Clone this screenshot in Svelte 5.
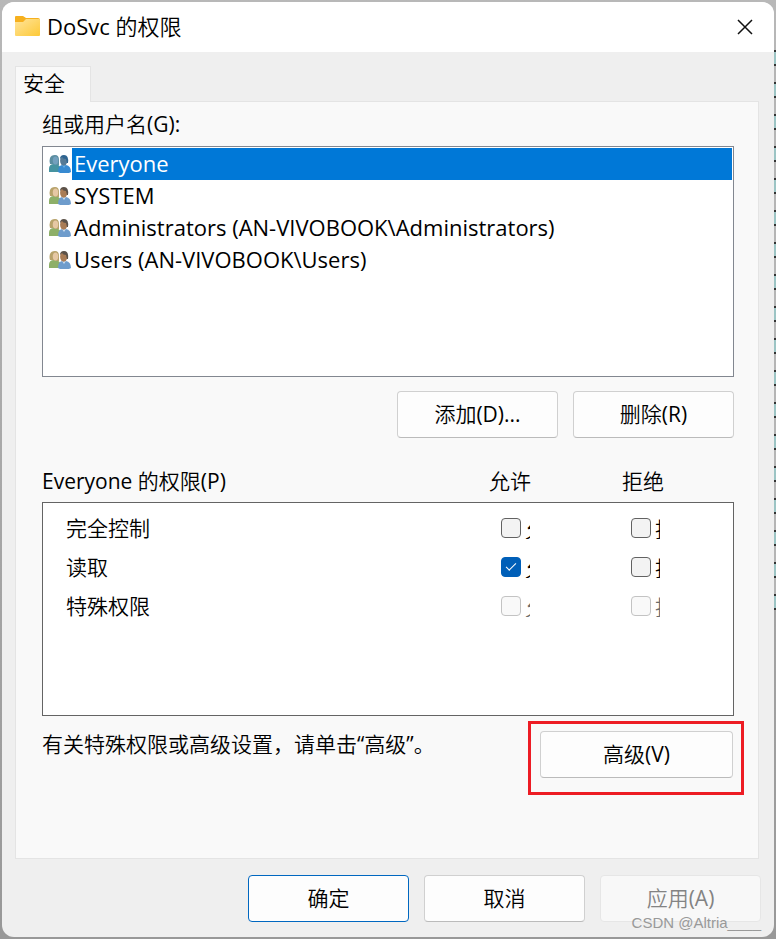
<script>
    const groups = [
        'Everyone',
        'SYSTEM',
        'Administrators (AN-VIVOBOOK\\Administrators)',
        'Users (AN-VIVOBOOK\\Users)'
    ];

    let selected = $state(groups[0]);
    let permissions = $state([
        {name: '完全控制', allow: false, deny: false},
        {name: '读取', allow: true, deny: false},
        {name: '特殊权限', allow: false, deny: false, disabled: true}
    ]);

    function shortName(name) {
        return name.split(' (')[0];
    }

    function onKey(event, name) {
        if (event.key === 'Enter' || event.key === ' ') {
            event.preventDefault();
            selected = name;
        }
    }
</script>

<main class="desktop">
    <div class="dialog" role="dialog" aria-labelledby="title">
        <header>
            <svg class="folder" viewBox="0 0 25 20" aria-hidden="true">
                <defs>
                    <linearGradient id="front" x1="0" y1="0" x2="1" y2="1">
                        <stop offset="0" stop-color="#ffe49b"/>
                        <stop offset="1" stop-color="#fdc937"/>
                    </linearGradient>
                </defs>
                <path d="M0 1Q0 0 1 0H8L11 2H23Q25 2 25 4V9H0Z" fill="#f6b01e"/>
                <path d="M0 6H8L11 3H24Q25 3 25 4V19Q25 20 24 20H1Q0 20 0 19Z" fill="url(#front)"/>
            </svg>
            <h1 id="title">DoSvc 的权限</h1>
            <button class="close" aria-label="关闭">
                <svg viewBox="0 0 16 16" aria-hidden="true">
                    <path d="M1 1L15 15M15 1L1 15" stroke="#111" stroke-width="1.5" fill="none"/>
                </svg>
            </button>
        </header>

        <div class="content">
            <div class="tabs" role="tablist">
                <button class="tab" role="tab" aria-selected="true">安全</button>
            </div>
            <section class="panel">
                <div class="label" id="groups-label">组或用户名(G):</div>
                <ul class="groups" role="listbox" aria-labelledby="groups-label">
                    {#each groups as name}
                        <li role="option"
                            tabindex="0"
                            class:active={selected === name}
                            aria-selected={selected === name}
                            onclick={() => selected = name}
                            onkeydown={(e) => onKey(e, name)}>
                            <svg class="people" viewBox="0 0 22 20" aria-hidden="true">
                                <path class="body-a" d="M0 18V15Q0 10 5 10Q11 10 12 15V18Z"/>
                                <path class="hair-a" d="M1 10Q0 7 1 4Q2 1 6 1Q10 1 10 6V11H7L4 10Z"/>
                                <ellipse class="face-a" cx="6.500" cy="6.500" rx="2.700" ry="4"/>
                                <path class="body-b" d="M9 18Q9 12 13 11H17Q22 12 22 18L20 19H11Z"/>
                                <path class="collar" d="M13 11L15 14L17 11Z"/>
                                <ellipse class="face-b" cx="14.700" cy="6.700" rx="3.600" ry="5"/>
                                <path class="hair-b" d="M11 5Q11 1 15 1Q20 1 19 9L18 9L17 5Q14 5 13 3Z"/>
                            </svg>
                            <span>{name}</span>
                        </li>
                    {/each}
                </ul>
                <div class="actions">
                    <button class="btn">添加(D)...</button>
                    <button class="btn">删除(R)</button>
                </div>

                <div class="heads">
                    <div class="head-name">{shortName(selected)} 的权限(P)</div>
                    <div class="head-allow" id="allow">允许</div>
                    <div class="head-deny" id="deny">拒绝</div>
                </div>
                <div class="permissions">
                    <table aria-describedby="allow deny">
                        <tbody>
                            {#each permissions as item}
                                <tr>
                                    <th scope="row">{item.name}</th>
                                    <td class="allow">
                                        <label class:disabled={item.disabled}>
                                            <input type="checkbox" bind:checked={item.allow} disabled={item.disabled}>
                                            <span>允许</span>
                                        </label>
                                    </td>
                                    <td class="deny">
                                        <label class:disabled={item.disabled}>
                                            <input type="checkbox" bind:checked={item.deny} disabled={item.disabled}>
                                            <span>拒绝</span>
                                        </label>
                                    </td>
                                </tr>
                            {/each}
                        </tbody>
                    </table>
                </div>

                <div class="advanced">
                    <p>有关特殊权限或高级设置，请单击“高级”。</p>
                    <div class="marked">
                        <button class="btn wide">高级(V)</button>
                    </div>
                </div>
            </section>
        </div>

        <footer>
            <button class="btn primary">确定</button>
            <button class="btn">取消</button>
            <button class="btn" disabled>应用(A)</button>
            <span class="watermark">CSDN @Altria____</span>
        </footer>
    </div>
</main>

<style>
    :global(body) {
        margin: 0;
        background: #b0b0b0;
    }

    .desktop {
        box-sizing: border-box;
        padding: 2px;
        font-family: "Open Sans", "Noto Sans CJK SC DemiLight", "Noto Sans CJK SC Light", "Noto Sans CJK SC", sans-serif;
        font-size: 21px;
        line-height: 30px;
        color: #000;
        /* slice of the window behind, seen past the right edge */
        background:
            repeating-linear-gradient(#333 0 2px, #9cc4c4 2px 14px, #333 14px 16px, #b5b5b5 16px 32px)
            right 50px / 2px 560px no-repeat,
            linear-gradient(#b8b8b8, #989898);
    }

    .dialog {
        background: #efefef;
        border-radius: 12px;
        overflow: hidden;
    }

    button {
        font: inherit;
        color: inherit;
    }

    header {
        display: flex;
        align-items: center;
        height: 50px;
        padding: 0 21px 0 13px;
        background: #fff;
    }

    .folder {
        width: 25px;
        height: 20px;
        margin: 0 7px 2px 0;
    }

    h1 {
        flex: 1;
        margin: 0;
        padding-bottom: 3px;
        font-size: 22px;
        font-weight: 400;
    }

    .close {
        display: flex;
        padding: 0;
        border: 0;
        background: none;
    }

    .close svg {
        width: 16px;
        height: 16px;
    }

    .content {
        padding: 14px 15px 0 13px;
    }

    .tabs {
        display: flex;
    }

    .tab {
        position: relative;
        height: 36px;
        padding: 0 25px 3px 7px;
        margin-bottom: -1px;
        border: 1px solid #e4e4e4;
        border-bottom: 0;
        background: #f9f9f9;
    }

    .panel {
        padding: 7px 24px 80px 26px;
        border: 1px solid #e4e4e4;
        background: #f9f9f9;
    }

    .label {
        margin-bottom: 7px;
    }

    .groups {
        box-sizing: border-box;
        height: 231px;
        margin: 0;
        padding: 1px;
        overflow: auto;
        list-style: none;
        border: 1px solid #828790;
        background: #fff;
        font-size: 22px;
    }

    .groups li {
        display: flex;
        align-items: center;
        height: 32px;
        padding-left: 5px;
        cursor: default;
    }

    .groups span {
        flex: 1;
        padding: 0 0 2px 2px;
        margin-left: 1px;
        line-height: 30px;
        white-space: nowrap;
    }

    .groups .active span {
        background: #0078d7;
        color: #fff;
    }

    .people {
        width: 22px;
        height: 20px;
    }

    .body-a { fill: #8daf68; }
    .hair-a { fill: #b7a26a; }
    .face-a { fill: #e6c8a4; }
    .body-b { fill: #6e9ccc; }
    .collar { fill: #c9dcef; }
    .face-b { fill: #a97c55; }
    .hair-b { fill: #5b5148; }

    .active .body-a { fill: #4693a0; }
    .active .hair-a { fill: #5b8da0; }
    .active .face-a { fill: #73a0bd; }
    .active .body-b { fill: #378ad1; }
    .active .collar { fill: #64aae3; }
    .active .face-b { fill: #557a96; }
    .active .hair-b { fill: #2e6490; }

    .actions {
        display: flex;
        justify-content: flex-end;
        gap: 15px;
        margin: 14px 0 28px;
    }

    .btn {
        box-sizing: border-box;
        width: 161px;
        height: 47px;
        padding: 0 0 2px;
        border: 1px solid #d0d0d0;
        border-bottom-color: #bbb;
        border-radius: 4px;
        background: #fdfdfd;
    }

    .btn.wide {
        width: 193px;
    }

    .btn.primary {
        border-color: #0067c0;
    }

    .btn:disabled {
        border-color: #e6e6e6;
        background: #f8f8f8;
        color: #838383;
    }

    .heads {
        display: flex;
        margin-bottom: 6px;
    }

    .head-name {
        flex: 1;
    }

    .head-allow {
        width: 133px;
    }

    .head-deny {
        width: 112px;
    }

    .permissions {
        box-sizing: border-box;
        height: 214px;
        padding: 5px 0;
        overflow: auto;
        border: 1px solid #646464;
        background: #fff;
    }

    table {
        width: 100%;
        border-collapse: collapse;
    }

    th, td {
        height: 39px;
        padding: 0;
        text-align: left;
        font-weight: 400;
    }

    th {
        padding-left: 23px;
    }

    .allow {
        width: 130px;
    }

    .deny {
        width: 102px;
    }

    label {
        display: flex;
        align-items: center;
    }

    /* the caption box is narrow, so only the start of the text shows */
    label span {
        width: 5px;
        height: 22px;
        margin-left: 4px;
        overflow: hidden;
        line-height: 24px;
        white-space: nowrap;
    }

    label.disabled {
        color: #6d6d6d;
    }

    input {
        appearance: none;
        box-sizing: border-box;
        width: 20px;
        height: 20px;
        margin: 0;
        border: 1px solid #626262;
        border-radius: 4px;
        background: #f3f3f3;
    }

    input:checked {
        display: flex;
        justify-content: center;
        border-color: #005fb8;
        background: #005fb8;
    }

    input:checked::before {
        content: "";
        width: 9px;
        height: 4px;
        margin-top: 5px;
        border: solid #fff;
        border-width: 0 0 1px 1px;
        transform: rotate(-45deg);
    }

    input:disabled {
        border-color: #c3c3c3;
        background: #f9f9f9;
    }

    .advanced {
        display: flex;
        justify-content: space-between;
        align-items: flex-start;
        padding: 15px 1px 0 0;
    }

    p {
        margin: 0;
        line-height: 26px;
    }

    .marked {
        position: relative;
        display: flex;
    }

    .marked::after {
        content: "";
        position: absolute;
        inset: -10px -11px -17px -12px;
        border: 3px solid #ed1c24;
        pointer-events: none;
    }

    footer {
        position: relative;
        display: flex;
        justify-content: flex-end;
        gap: 15px;
        padding: 16px 13px 15px;
    }

    .watermark {
        position: absolute;
        right: 13px;
        bottom: 4px;
        font-family: "Liberation Sans", sans-serif;
        font-size: 15px;
        line-height: 20px;
        color: #999;
    }
</style>
